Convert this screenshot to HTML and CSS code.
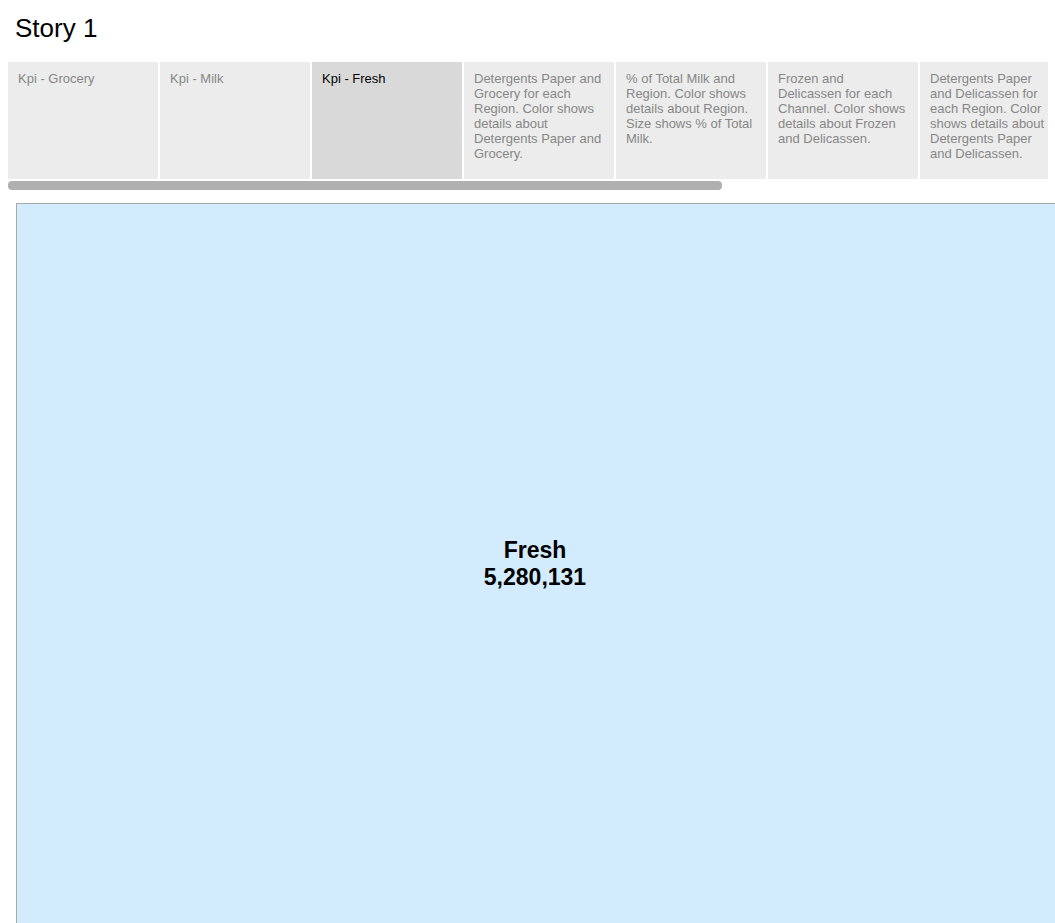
FILE: index.html
```html
<!DOCTYPE html>
<html>
<head>
<meta charset="utf-8">
<title>Story 1</title>
<link rel="stylesheet" href="styles.css">
</head>
<body>
<div class="page">
  <div class="title">Story 1</div>
  <div class="strip">
    <div class="tab">Kpi - Grocery</div>
    <div class="tab">Kpi - Milk</div>
    <div class="tab tab-active">Kpi - Fresh</div>
    <div class="tab">Detergents Paper and Grocery for each Region. Color shows details about Detergents Paper and Grocery.</div>
    <div class="tab">% of Total Milk and Region. Color shows details about Region. Size shows % of Total Milk.</div>
    <div class="tab">Frozen and Delicassen for each Channel. Color shows details about Frozen and Delicassen.</div>
    <div class="tab tab-last">Detergents Paper and Delicassen for each Region. Color shows details about Detergents Paper and Delicassen.</div>
  </div>
  <div class="scroll">
    <div class="thumb"></div>
  </div>
  <div class="viz">
    <div class="kpi">
      <div class="kpi-line">Fresh</div>
      <div class="kpi-line">5,280,131</div>
    </div>
  </div>
</div>
</body>
</html>
```

FILE: styles.css
```css
html, body {
  margin: 0;
  padding: 0;
  background: #ffffff;
  overflow: hidden;
}

.page {
  width: 1055px;
  height: 923px;
  overflow: hidden;
  font-family: "Liberation Sans", Arial, sans-serif;
}

.title {
  padding: 13px 0 0 15px;
  height: 30px;
  line-height: 30px;
  font-size: 26px;
  color: #000000;
}

.strip {
  margin: 19px 0 0 8px;
  width: 1040px;
  height: 117px;
  display: flex;
  gap: 2px;
  overflow: hidden;
}

.tab {
  flex: 0 0 150px;
  box-sizing: border-box;
  height: 117px;
  padding: 9px 8px 0 10px;
  background: #ececec;
  color: #878787;
  font-size: 13px;
  line-height: 15px;
}

.tab-last {
  flex: 0 0 128px;
  padding-right: 0;
}

.tab-active {
  background: #d9d9d9;
  color: #000000;
}

.scroll {
  margin: 2px 0 0 8px;
  width: 1040px;
  height: 9px;
}

.thumb {
  width: 714px;
  height: 9px;
  border-radius: 4px;
  background: #b0b0b0;
}

.viz {
  margin: 13px 0 0 16px;
  width: 1036px;
  height: 720px;
  padding-right: 60px;
  border-top: 1px solid #aaaaaa;
  border-left: 1px solid #aaaaaa;
  background: #d3ecfd;
  display: flex;
  align-items: center;
  justify-content: center;
}

.kpi {
  text-align: center;
  font-weight: bold;
  font-size: 23px;
  line-height: 27px;
  color: #000000;
}
```
